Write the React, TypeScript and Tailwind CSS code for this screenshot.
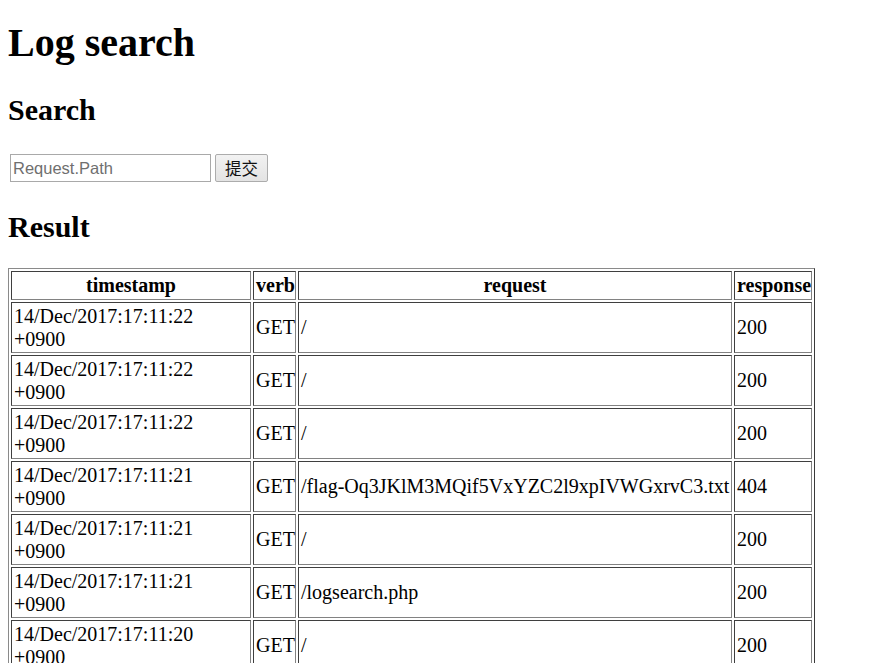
import React from "react";

type Row = { ts: string; verb: string; path: string; code: string };

const rows: Row[] = [
  { ts: "14/Dec/2017:17:11:22 +0900", verb: "GET", path: "/", code: "200" },
  { ts: "14/Dec/2017:17:11:22 +0900", verb: "GET", path: "/", code: "200" },
  { ts: "14/Dec/2017:17:11:22 +0900", verb: "GET", path: "/", code: "200" },
  { ts: "14/Dec/2017:17:11:21 +0900", verb: "GET", path: "/flag-Oq3JKlM3MQif5VxYZC2l9xpIVWGxrvC3.txt", code: "404" },
  { ts: "14/Dec/2017:17:11:21 +0900", verb: "GET", path: "/", code: "200" },
  { ts: "14/Dec/2017:17:11:21 +0900", verb: "GET", path: "/logsearch.php", code: "200" },
  { ts: "14/Dec/2017:17:11:20 +0900", verb: "GET", path: "/", code: "200" },
  { ts: "14/Dec/2017:17:11:20 +0900", verb: "GET", path: "/", code: "200" },
  { ts: "14/Dec/2017:17:11:19 +0900", verb: "GET", path: "/", code: "200" },
];

const cell =
  "border border-t-[#3f3f3f] border-l-[#3f3f3f] border-r-[#828282] border-b-[#828282] px-[2px] align-middle";

export default function App() {
  return (
    <div className="min-h-screen bg-white px-[8px] font-['Liberation_Serif','Times_New_Roman',serif] text-black text-[20px] leading-[23px]">
      <h1 className="pt-[20px] text-[40px] leading-[46px] font-bold">Log search</h1>
      <h2 className="mt-[26.5px] text-[30px] leading-[34.5px] font-bold">Search</h2>

      <form
        className="mt-[27px] flex items-center"
        onSubmit={(e) => e.preventDefault()}
      >
        <input
          type="text"
          placeholder="Request.Path"
          className="ml-[2px] h-[28px] w-[201px] border border-[#a9a9a9] bg-white px-[2px] font-['Liberation_Sans',Arial,sans-serif] text-[16.5px] outline-none placeholder:text-[#6f6f6f]"
        />
        <button
          type="submit"
          className="ml-[4px] h-[28px] w-[53px] rounded-[2px] border border-[#acacac] bg-gradient-to-b from-[#f2f2f2] to-[#e3e3e3] font-['Noto_Sans_CJK_SC','Liberation_Sans',sans-serif] text-[16.5px] leading-none text-[#111]"
        >
          提交
        </button>
      </form>

      <h2 className="mt-[28px] text-[30px] leading-[34.5px] font-bold">Result</h2>

      <table className="mt-[23.5px] w-[807px] table-fixed border-separate border-spacing-[2px] border border-t-[#8a8a8a] border-l-[#8a8a8a] border-r-[#3a3a3a] border-b-[#3a3a3a]">
        <colgroup>
          <col className="w-[240px]" />
          <col className="w-[43px]" />
          <col className="w-[434px]" />
          <col className="w-[78px]" />
        </colgroup>
        <thead>
          <tr>
            <th className={`${cell} py-[2px] text-center font-bold`}>timestamp</th>
            <th className={`${cell} py-[2px] text-center font-bold`}>verb</th>
            <th className={`${cell} py-[2px] text-center font-bold`}>request</th>
            <th className={`${cell} py-[2px] text-center font-bold`}>response</th>
          </tr>
        </thead>
        <tbody>
          {rows.map((r, i) => (
            <tr key={i}>
              <td className={`${cell} py-[1.5px] text-left`}>{r.ts}</td>
              <td className={`${cell} py-[1.5px] text-left`}>{r.verb}</td>
              <td className={`${cell} py-[1.5px] text-left whitespace-nowrap`}>{r.path}</td>
              <td className={`${cell} py-[1.5px] text-left`}>{r.code}</td>
            </tr>
          ))}
        </tbody>
      </table>
    </div>
  );
}
